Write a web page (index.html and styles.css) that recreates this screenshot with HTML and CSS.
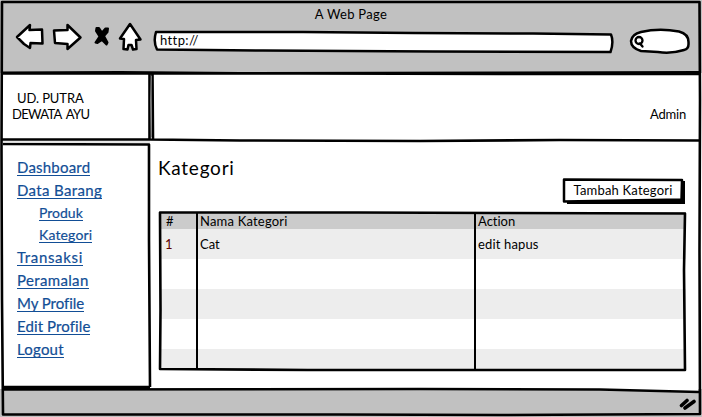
FILE: index.html
```
<!DOCTYPE html>
<html lang="id">
<head>
<meta charset="utf-8">
<title>A Web Page</title>
<link rel="stylesheet" href="styles.css">
</head>
<body>
<div class="window">
  <header class="chrome">
    <div class="title">A Web Page</div>
    <div class="toolbar">
      <svg class="nav" width="128" height="32" viewBox="0 0 128 32">
        <g class="shape">
          <path d="M2 15 L15 3 L14.500 8 L27 7.500 L27.500 21.500 L15.500 21 L15 26 L9 22 Z"/>
          <path d="M39 8.500 L52.500 8 L52.500 3 L65.500 15.500 L52.500 27 L52.500 22 L40 21 Z"/>
          <path d="M115 2 L105 16.500 L109 17 L108.500 27 L112.500 27.500 L113.500 23 L116.500 23 L118 27.500 L121.500 27 L121 18 L125.500 17.500 Z"/>
        </g>
        <path class="cross" d="M81.500 6 L84 6 L87 10.500 L90.500 6.500 L93 6.500 L92.500 10 L89 14 L92.500 20.500 L91.500 22.500 L87 18 L82.500 21 L80.500 20.500 L84.500 14.500 L81 9 Z"/>
      </svg>
      <div class="address">
        <svg class="sketch" width="462" height="24"><path class="shape" d="M5 2 L150 2 L260 3 L380 3.500 L458 4.500 Q461 12 457.500 22 L280 21.500 L110 20.500 L4 19.500 Q0 12 3 2 Z"/></svg>
        <span>http://</span>
      </div>
      <svg class="search" width="62" height="28" viewBox="0 0 62 28">
        <path class="shape" d="M12 4 Q30 0 50 3.500 Q60 6 59.500 15 Q60 21 55 22 Q42 26 29 24 L12 23 Q2 20 2 13 Q3 6 12 4 Z"/>
        <circle class="lens" cx="10" cy="12.500" r="3.500"/><path class="lens" d="M11 15.500 L13.500 18.500"/>
      </svg>
    </div>
  </header>
  <div class="banner">
    <div class="brand"><span class="ud">UD. PUTRA</span><span class="ayu">DEWATA AYU</span></div>
    <div class="user">Admin</div>
  </div>
  <div class="body">
    <nav class="menu">
      <a class="m1">Dashboard</a>
      <a class="m2">Data Barang</a>
      <a class="sub m3">Produk</a>
      <a class="sub m4">Kategori</a>
      <a class="m5">Transaksi</a>
      <a class="m6">Peramalan</a>
      <a class="m7">My Profile</a>
      <a class="m8">Edit Profile</a>
      <a class="m9">Logout</a>
    </nav>
    <main class="content">
      <h1>Kategori</h1>
      <button class="add"><svg class="sketch" width="124" height="28"><path class="shadow" d="M120 3 L123 3 L123 26 L5 26 L5 22 L120 22 Z"/><path class="shape" d="M2 1.500 L120 2 L119.500 21.500 L2 23.500 Z"/></svg><span>Tambah Kategori</span></button>
      <div class="grid">
        <div class="row head"><span class="num">#</span><span class="name">Nama Kategori</span><span class="act">Action</span></div>
        <div class="row"><span class="num one">1</span><span class="cat">Cat</span><span class="ops">edit hapus</span></div>
        <div class="row"></div><div class="row"></div><div class="row"></div><div class="row last"></div>
        <svg class="sketch" width="530" height="162"><path class="line" d="M2 2.500 L200 2.500 L340 3 L527 3.500 L526 60 L527 160 L330 160 L150 160 L2 159 L2.500 100 Z"/><path class="rule" d="M39 2 L39 160 M317 2 L317 160"/></svg>
      </div>
    </main>
  </div>
  <footer class="status">
    <svg width="18" height="14"><path class="grip" d="M2.500 8.500 L8 3.500 M6 11 L15 4.500"/></svg>
  </footer>
  <svg class="sketch frame" width="702" height="417">
    <path class="tone" d="M620 388 L698 388 L698 392 L620 390 Z"/>
    <path class="line" d="M2 2 L350 2 L699.500 2 L700 100 L699.500 250 L700 414 L500 415 L340 414.500 L3 414.500 L2 300 L1.500 150 Z"/>
    <path class="line" d="M2 73.500 L300 73.500 L500 74 L699 74"/>
    <path class="rule" d="M2 72.500 L120 72 L240 73 L500 72.500 L699 72"/>
    <path class="line" d="M149.500 74 L149.500 139 M152.500 74 L153 139 M2 139.500 L150 139.500 L240 140.500 L420 141 L560 140 L699 140.500 M3 144 L149 144.500 L149 240 L150 387"/>
    <path class="line" d="M2 387 L150 387 M2 389.500 L420 389 L600 389.500 L699 392"/>
    <path class="seam" d="M151.500 76 L150.500 100 L151.500 137"/><path class="gap" d="M3 142 L150 142"/>
  </svg>
</div>
</body>
</html>
```
FILE: styles.css
```
* { box-sizing: border-box; }
body { margin: 0; background: #fff; font: 13px/16px Lato, "Open Sans", sans-serif; font-variant-ligatures: none; color: #000; }
.window { position: relative; width: 702px; height: 417px; overflow: hidden; display: flex; flex-direction: column; }
.sketch { position: absolute; left: 0; top: 0; overflow: visible; pointer-events: none; }
.shape { fill: #fff; stroke: #000; stroke-width: 2.5; stroke-linejoin: round; }
.line { fill: none; stroke: #000; stroke-width: 2.6; stroke-linejoin: round; }
.rule { fill: none; stroke: #000; stroke-width: 2; }
.seam { fill: none; stroke: #777; stroke-width: 1; }
.gap { fill: none; stroke: #ddd; stroke-width: 1.5; }
.tone { fill: #fff; }
.chrome { height: 73px; background: #c1c1c1; padding-top: 6px; }
.title { text-align: center; letter-spacing: .3px; }
.toolbar { display: flex; align-items: flex-start; }
.nav { margin-left: 15px; }
.nav, .search { display: block; flex: none; }
.cross { fill: #000; stroke: #000; stroke-width: 2; stroke-linejoin: round; }
.address { position: relative; width: 462px; height: 24px; margin: 8px 0 0 10px; padding: 2px 0 0 7px; }
.address span { position: relative; letter-spacing: .4px; }
.search { margin: 6px 0 0 14px; }
.lens { fill: none; stroke: #000; stroke-width: 2.3; stroke-linecap: round; }
.banner { display: flex; height: 68px; }
.brand { width: 151px; padding: 17px 0 0 12px; display: flex; flex-direction: column; }
.ud { padding-left: 5px; letter-spacing: -.1px; }
.ayu { letter-spacing: -.7px; word-spacing: 2.5px; }
.user { flex: 1; text-align: right; padding: 33px 16px 0 0; letter-spacing: -.2px; }
.body { display: flex; height: 248px; }
.menu { width: 151px; padding: 16px 0 0 17px; display: flex; flex-direction: column; align-items: flex-start; font-size: 15px; }
.menu a { height: 19px; line-height: 21px; margin-bottom: 4px; color: #124e96; border-bottom: 1px solid #124e96; white-space: nowrap; -webkit-text-stroke: .2px #124e96; }
.menu .sub { height: 18px; line-height: 19px; margin-left: 22px; font-size: 14px; }
.menu .m1 { letter-spacing: .2px; }
.menu .m2 { letter-spacing: .35px; }
.menu .m4 { letter-spacing: .15px; }
.menu .m5 { letter-spacing: .65px; }
.menu .m6 { letter-spacing: .35px; }
.menu .m7 { letter-spacing: -.05px; }
.menu .m8 { letter-spacing: .1px; }
.menu .m9 { letter-spacing: .2px; }
.content { flex: 1; position: relative; padding: 15px 0 0 7px; display: flex; flex-direction: column; }
h1 { margin: 0; font-size: 19px; line-height: 23px; font-weight: 400; letter-spacing: .75px; }
.add { position: relative; align-self: flex-end; width: 124px; height: 28px; margin: -1px 16px 0 0; padding: 0; border: 0; background: none; font: inherit; color: #000; letter-spacing: .2px; }
.add span { position: relative; top: -2px; left: -1px; }
.grid { position: relative; width: 530px; height: 162px; margin-top: 4px; padding: 2px; }
.row { display: grid; grid-template-columns: 36px 278px 1fr; height: 30px; line-height: 30px; }
.row span { padding-left: 4px; }
.row .num { padding-left: 6px; }
.row:nth-child(even) { background: #ededed; }
.head { height: 17px; line-height: 19px; background: #cbcbcb; }
.name { letter-spacing: .2px; }
.ops { letter-spacing: .15px; }
.row .one { padding-left: 5px; }
.row.last { height: 20px; }
.one { color: #600000; }
.status { height: 28px; background: #c1c1c1; display: flex; justify-content: flex-end; padding: 8px 5px 0 0; }
.grip { stroke: #000; stroke-width: 3.6; stroke-linecap: round; }
```
